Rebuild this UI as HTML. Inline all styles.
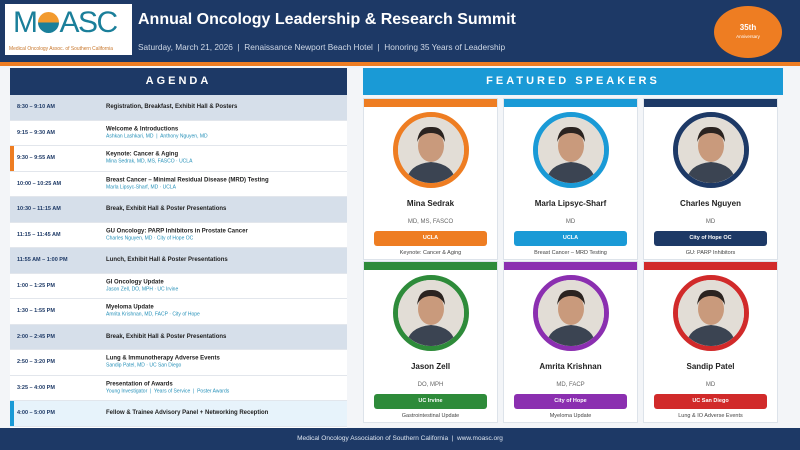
<!DOCTYPE html>
<html><head><meta charset="utf-8"><style>
*{margin:0;padding:0;box-sizing:border-box}
body{width:800px;height:450px;overflow:hidden;background:#f3f5f8;font-family:"Liberation Sans",sans-serif;position:relative}
.hdr{position:absolute;left:0;top:0;width:800px;height:62px;background:#1d3966}
.oline{position:absolute;left:0;top:62px;width:800px;height:4px;background:#ee7d22}
.logo{position:absolute;left:5px;top:4px;width:127px;height:51px;background:#fff;overflow:hidden}
.logo .m{position:absolute;left:8px;top:3px;font-size:30px;line-height:32px;color:#1a7f9a;letter-spacing:-1.5px;white-space:nowrap}
.logo .s{position:absolute;left:4px;top:42px;font-size:5.6px;color:#c8762a;white-space:nowrap;transform:scaleX(.88);transform-origin:left}
.title{position:absolute;left:138px;top:11px;color:#fff;font-size:16px;font-weight:bold}
.sub{position:absolute;left:138px;top:42px;color:#cfd8e6;font-size:8.3px}
.ann{position:absolute;left:714px;top:6px;width:68px;height:52px;border-radius:50%;background:#ee7d22;color:#fff;text-align:center}
.ann b{display:block;font-size:8px;margin-top:17px}
.ann i{font-style:normal;font-size:4.5px;display:block;margin-top:2px}
.ag{position:absolute;left:10px;top:68px;width:337px;height:360px;background:#fff}
.agh{height:27px;background:#1d3966;color:#fff;text-align:center;font-weight:bold;font-size:11px;letter-spacing:3px;line-height:27px}
.row{position:relative;height:25.5px;border-bottom:1px solid #e2e6ec;font-size:5.5px;color:#1d3966}
.row.sh{background:#d6dfea}
.row.hl{background:#e7f3fb}
.row .t{position:absolute;left:7px;top:50%;transform:translateY(-50%);font-weight:bold;color:#1d3966}
.row .d{position:absolute;left:96px;top:50%;transform:translateY(-50%)}
.row .d b{display:block;font-size:6px;color:#222}
.row .d span{display:block;color:#2590b8;font-size:5px;margin-top:1px}
.bar{position:absolute;left:0;top:0;width:4px;height:100%}
.sph{position:absolute;left:363px;top:68px;width:420px;height:27px;background:#1a9ad6;color:#fff;text-align:center;font-weight:bold;font-size:11px;letter-spacing:3px;line-height:27px}
.card{position:absolute;width:135px;height:162px;background:#fff;border:1px solid #dde3ea;text-align:center}
.card .top{height:8px}
.ph{position:absolute;left:29px;top:13px;width:76px;height:76px;border-radius:50%;border:5px solid;overflow:hidden;background:#e8e8e8}
.nm{position:absolute;left:0;width:100%;top:100px;font-weight:bold;font-size:8px;color:#222}
.cr{position:absolute;left:0;width:100%;top:120px;font-size:6px;color:#666}
.pl{position:absolute;left:10px;width:113px;top:132px;height:15px;border-radius:3px;color:#fff;font-weight:bold;font-size:5.5px;line-height:15px}
.tp{position:absolute;left:0;width:100%;top:151px;font-size:5.5px;color:#444}
.ftr{position:absolute;left:0;top:428px;width:800px;height:22px;background:#1d3966;color:#dfe6f0;font-size:6.5px;text-align:center;line-height:22px}
</style></head><body>
<div class="hdr"></div><div class="oline"></div>
<div class="logo"><div class="m">M<span style="display:inline-block;width:21px;height:21px;border-radius:50%;background:linear-gradient(#f29a2e 50%,#1a7f9a 50%);vertical-align:-1px;margin:0 1px"></span>ASC</div><div class="s">Medical Oncology Assoc. of Southern California</div></div>
<div class="title">Annual Oncology Leadership &amp; Research Summit</div>
<div class="sub">Saturday, March 21, 2026 &nbsp;|&nbsp; Renaissance Newport Beach Hotel &nbsp;|&nbsp; Honoring 35 Years of Leadership</div>
<div class="ann"><b>35th</b><i>Anniversary</i></div>

<div class="ag"><div class="agh">AGENDA</div>
<div class="row sh"><div class="t">8:30 – 9:10 AM</div><div class="d"><b>Registration, Breakfast, Exhibit Hall &amp; Posters</b></div></div>
<div class="row"><div class="t">9:15 – 9:30 AM</div><div class="d"><b>Welcome &amp; Introductions</b><span>Ashkan Lashkari, MD &nbsp;|&nbsp; Anthony Nguyen, MD</span></div></div>
<div class="row"><div class="bar" style="background:#ee7d22"></div><div class="t">9:30 – 9:55 AM</div><div class="d"><b>Keynote: Cancer &amp; Aging</b><span>Mina Sedrak, MD, MS, FASCO · UCLA</span></div></div>
<div class="row"><div class="t">10:00 – 10:25 AM</div><div class="d"><b>Breast Cancer – Minimal Residual Disease (MRD) Testing</b><span>Marla Lipsyc-Sharf, MD · UCLA</span></div></div>
<div class="row sh"><div class="t">10:30 – 11:15 AM</div><div class="d"><b>Break, Exhibit Hall &amp; Poster Presentations</b></div></div>
<div class="row"><div class="t">11:15 – 11:45 AM</div><div class="d"><b>GU Oncology: PARP Inhibitors in Prostate Cancer</b><span>Charles Nguyen, MD · City of Hope OC</span></div></div>
<div class="row sh"><div class="t">11:55 AM – 1:00 PM</div><div class="d"><b>Lunch, Exhibit Hall &amp; Poster Presentations</b></div></div>
<div class="row"><div class="t">1:00 – 1:25 PM</div><div class="d"><b>GI Oncology Update</b><span>Jason Zell, DO, MPH · UC Irvine</span></div></div>
<div class="row"><div class="t">1:30 – 1:55 PM</div><div class="d"><b>Myeloma Update</b><span>Amrita Krishnan, MD, FACP · City of Hope</span></div></div>
<div class="row sh"><div class="t">2:00 – 2:45 PM</div><div class="d"><b>Break, Exhibit Hall &amp; Poster Presentations</b></div></div>
<div class="row"><div class="t">2:50 – 3:20 PM</div><div class="d"><b>Lung &amp; Immunotherapy Adverse Events</b><span>Sandip Patel, MD · UC San Diego</span></div></div>
<div class="row"><div class="t">3:25 – 4:00 PM</div><div class="d"><b>Presentation of Awards</b><span>Young Investigator &nbsp;|&nbsp; Years of Service &nbsp;|&nbsp; Poster Awards</span></div></div>
<div class="row hl"><div class="bar" style="background:#1a9ad6"></div><div class="t">4:00 – 5:00 PM</div><div class="d"><b>Fellow &amp; Trainee Advisory Panel + Networking Reception</b></div></div>
</div>

<div class="sph">FEATURED SPEAKERS</div>

<svg width="0" height="0" style="position:absolute"><defs><symbol id="av" viewBox="0 0 66 66"><rect width="66" height="66" fill="#e2ddd6"/><path d="M8 66 Q10 47 33 45 Q56 47 58 66Z" fill="#3b4452"/><ellipse cx="33" cy="29" rx="13" ry="16" fill="#c99a7c"/><path d="M19 25 Q21 9 33 10 Q46 9 47 25 Q43 16 33 16 Q23 16 19 25Z" fill="#2b2320"/></symbol></defs></svg>

<div class="card" style="left:363px;top:98px"><div class="top" style="background:#ee7d22"></div><div class="ph" style="border-color:#ee7d22"><svg width="66" height="66"><use href="#av"/></svg></div><div class="nm">Mina Sedrak</div><div class="cr">MD, MS, FASCO</div><div class="pl" style="background:#ee7d22">UCLA</div><div class="tp">Keynote: Cancer &amp; Aging</div></div>
<div class="card" style="left:503px;top:98px"><div class="top" style="background:#1a9ad6"></div><div class="ph" style="border-color:#1a9ad6"><svg width="66" height="66"><use href="#av"/></svg></div><div class="nm">Marla Lipsyc-Sharf</div><div class="cr">MD</div><div class="pl" style="background:#1a9ad6">UCLA</div><div class="tp">Breast Cancer – MRD Testing</div></div>
<div class="card" style="left:643px;top:98px"><div class="top" style="background:#1d3966"></div><div class="ph" style="border-color:#1d3966"><svg width="66" height="66"><use href="#av"/></svg></div><div class="nm">Charles Nguyen</div><div class="cr">MD</div><div class="pl" style="background:#1d3966">City of Hope OC</div><div class="tp">GU: PARP Inhibitors</div></div>
<div class="card" style="left:363px;top:261px"><div class="top" style="background:#2e8b3a"></div><div class="ph" style="border-color:#2e8b3a"><svg width="66" height="66"><use href="#av"/></svg></div><div class="nm">Jason Zell</div><div class="cr">DO, MPH</div><div class="pl" style="background:#2e8b3a">UC Irvine</div><div class="tp">Gastrointestinal Update</div></div>
<div class="card" style="left:503px;top:261px"><div class="top" style="background:#8b2fb0"></div><div class="ph" style="border-color:#8b2fb0"><svg width="66" height="66"><use href="#av"/></svg></div><div class="nm">Amrita Krishnan</div><div class="cr">MD, FACP</div><div class="pl" style="background:#8b2fb0">City of Hope</div><div class="tp">Myeloma Update</div></div>
<div class="card" style="left:643px;top:261px"><div class="top" style="background:#d12a2a"></div><div class="ph" style="border-color:#d12a2a"><svg width="66" height="66"><use href="#av"/></svg></div><div class="nm">Sandip Patel</div><div class="cr">MD</div><div class="pl" style="background:#d12a2a">UC San Diego</div><div class="tp">Lung &amp; IO Adverse Events</div></div>

<div class="ftr">Medical Oncology Association of Southern California &nbsp;|&nbsp; www.moasc.org</div>
</body></html>
